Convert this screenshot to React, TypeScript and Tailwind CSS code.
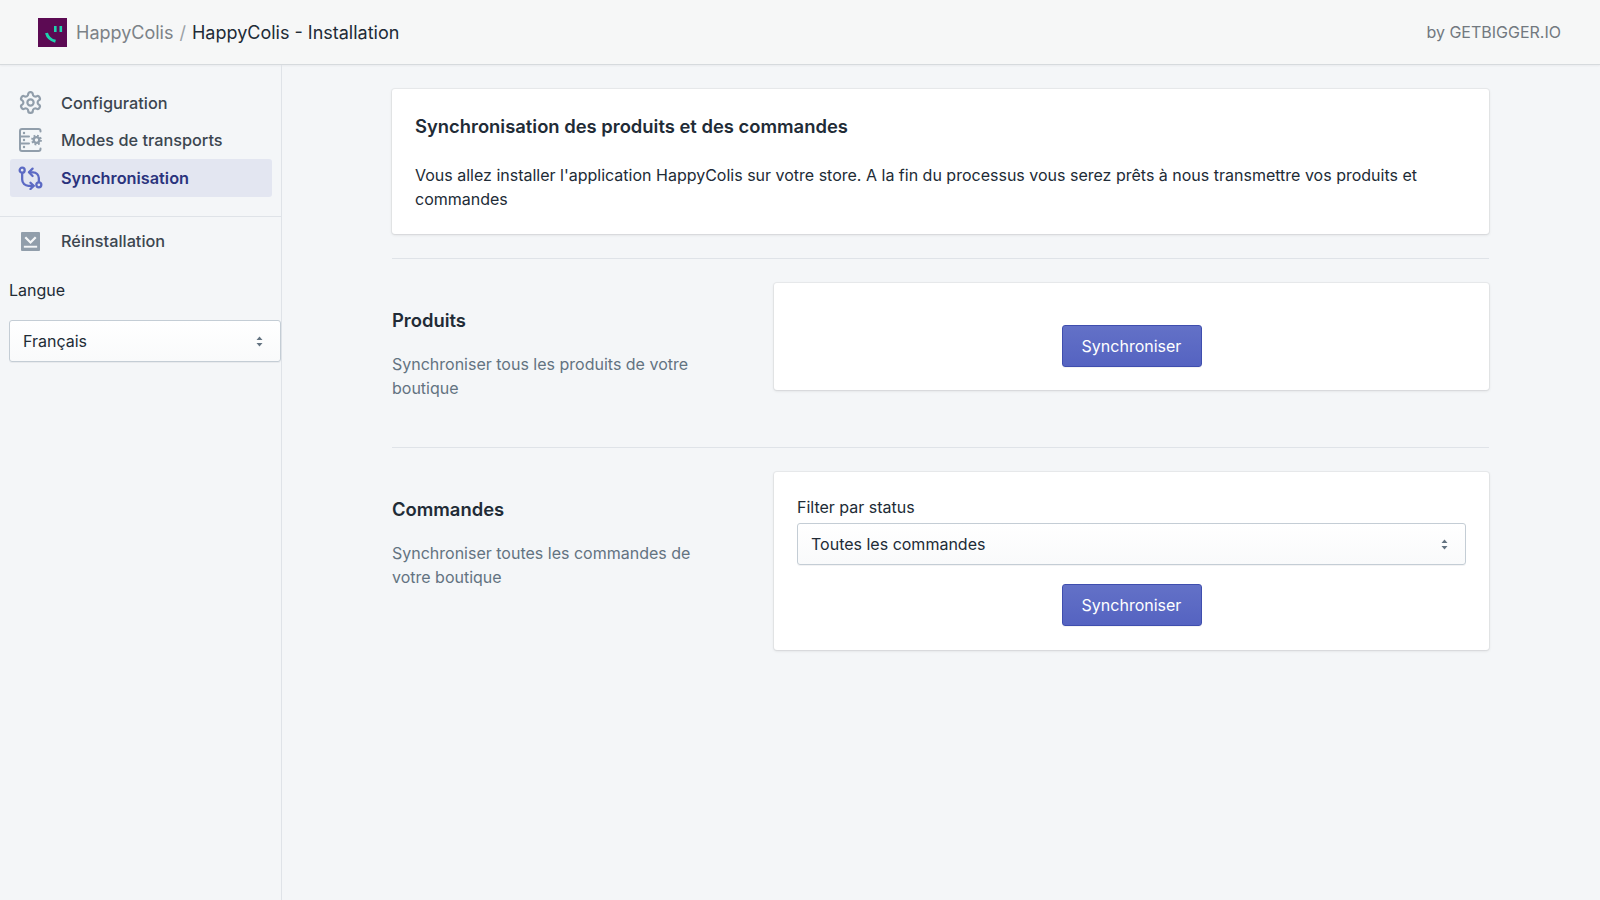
import React from "react";

const inter = { fontFamily: "Inter, sans-serif" };

function Chevrons() {
  return (
    <svg width="7" height="13" viewBox="0 0 7 13">
      <path d="M3.5 1.5 L6.5 5 H0.5 Z M3.5 11.5 L0.5 8 H6.5 Z" fill="#637381" />
    </svg>
  );
}

function Select({ label }: { label: string }) {
  return (
    <div className="flex h-[42px] items-center justify-between rounded-[3px] border border-[#c4cdd5] bg-gradient-to-b from-white to-[#f9fafb] pl-[13px] pr-[17px] text-[16px] text-[#212b36] shadow-[0_1px_0_0_rgba(22,29,37,0.05)]">
      <span>{label}</span>
      <Chevrons />
    </div>
  );
}

function SyncButton() {
  return (
    <button className="flex h-[42px] w-[140px] items-center justify-center rounded-[3px] border border-[#3f4eae] bg-gradient-to-b from-[#6371c7] to-[#5563c1] text-[16px] text-white shadow-[0_1px_0_0_rgba(22,29,37,0.05)]">
      Synchroniser
    </button>
  );
}

function NavItem({ icon, label, active = false }: { icon: React.ReactNode; label: string; active?: boolean }) {
  return (
    <div className={`flex h-[37.5px] items-center rounded-[3px] ${active ? "bg-[#e3e6f1] font-semibold text-[#2a337d]" : "font-medium text-[#3c4650]"}`}>
      <div className="mr-[10px] flex w-[41px] shrink-0 items-center justify-center">{icon}</div>
      <span className="text-[16.3px]">{label}</span>
    </div>
  );
}

function GearIcon() {
  return (
    <svg width="25" height="25" viewBox="0 0 24 24" fill="none" stroke="#919eab" strokeWidth="2.1" strokeLinecap="round" strokeLinejoin="round">
      <path d="M12.22 2h-.44a2 2 0 0 0-2 2v.18a2 2 0 0 1-1 1.73l-.43.25a2 2 0 0 1-2 0l-.15-.08a2 2 0 0 0-2.73.73l-.22.38a2 2 0 0 0 .73 2.73l.15.1a2 2 0 0 1 1 1.72v.51a2 2 0 0 1-1 1.74l-.15.09a2 2 0 0 0-.73 2.73l.22.38a2 2 0 0 0 2.73.73l.15-.08a2 2 0 0 1 2 0l.43.25a2 2 0 0 1 1 1.73V20a2 2 0 0 0 2 2h.44a2 2 0 0 0 2-2v-.18a2 2 0 0 1 1-1.73l.43-.25a2 2 0 0 1 2 0l.15.08a2 2 0 0 0 2.73-.73l.22-.39a2 2 0 0 0-.73-2.73l-.15-.08a2 2 0 0 1-1-1.74v-.5a2 2 0 0 1 1-1.74l.15-.09a2 2 0 0 0 .73-2.73l-.22-.38a2 2 0 0 0-2.73-.73l-.15.08a2 2 0 0 1-2 0l-.43-.25a2 2 0 0 1-1-1.73V4a2 2 0 0 0-2-2z" />
      <circle cx="12" cy="12" r="3" />
    </svg>
  );
}

function ServerGearIcon() {
  return (
    <svg width="24" height="24" viewBox="0 0 24 24" fill="none" stroke="#919eab" strokeWidth="2" strokeLinecap="round">
      <path d="M21.5 3.5V3a2 2 0 0 0-2-2H3a2 2 0 0 0-2 2v18a2 2 0 0 0 2 2h16.5a2 2 0 0 0 2-2v-.5" />
      <path d="M1 8.5h9M1 15.5h9" />
      <path d="M5 5h.01M5 12h.01M5 19h.01" strokeWidth="2.4" />
      <circle cx="17.5" cy="12" r="2.8" strokeWidth="2.3" />
      <circle cx="17.5" cy="12" r="4.5" strokeWidth="1.8" strokeDasharray="1.8 1.73" strokeLinecap="butt" />
    </svg>
  );
}

function SyncIcon() {
  return (
    <svg width="25" height="25" viewBox="0 0 24 24" fill="none" stroke="#5c6ac4" strokeWidth="2.2" strokeLinecap="round" strokeLinejoin="round">
      <circle cx="4" cy="5" r="2.4" />
      <circle cx="20" cy="19" r="2.4" />
      <path d="M4 8v6a6 6 0 0 0 6 6h5" />
      <path d="M12 17l3 3-3 3" />
      <path d="M20 16v-3.500a5.500 5.500 0 0 0-5.500-5.500H11" />
      <path d="M14 3.500 10.500 7l3.500 3.500" />
    </svg>
  );
}

function InstallIcon() {
  return (
    <svg width="19" height="19" viewBox="0 0 20 20">
      <rect width="20" height="20" rx="1" fill="#919eab" />
      <path d="M4.500 5.500 10 11l5.500-5.500" fill="none" stroke="#f4f6f8" strokeWidth="2.400" />
      <rect x="3" y="14.500" width="14" height="2" fill="#f4f6f8" />
    </svg>
  );
}

function Logo() {
  return (
    <svg width="29" height="29" viewBox="0 0 29 29" className="shrink-0">
      <rect width="29" height="29" fill="#5c0a53" />
      <path d="M8.500 15c1 4 4 7 9 8.300" fill="none" stroke="#1ed3ae" strokeWidth="3" />
      <rect x="16" y="8" width="2.600" height="6" fill="#1ed3ae" />
      <rect x="21.500" y="8" width="2.600" height="6" fill="#1ed3ae" />
    </svg>
  );
}

const cardShadow = "shadow-[0_0_0_1px_rgba(63,63,68,0.05),0_1px_3px_0_rgba(63,63,68,0.15)]";

export default function App() {
  return (
    <div className="flex h-[900px] w-[1600px] flex-col overflow-hidden bg-[#f4f6f8] text-[16px] text-[#212b36]" style={inter}>
      <header className="flex h-[65px] shrink-0 items-center justify-between border-b border-[#d6dadd] bg-[#f6f7f7] pl-[38px] pr-[39px] shadow-[0_1px_2px_rgba(22,29,37,0.05)]">
        <div className="flex items-center text-[18px]">
          <Logo />
          <span className="ml-[9px] text-[#7c8287]">HappyColis</span>
          <span className="mx-[6px] text-[#9ba1a6]">/</span>
          <span className="text-[#212b36]">HappyColis - Installation</span>
        </div>
        <span className="text-[16px] text-[#72797f]">by GETBIGGER.IO</span>
      </header>
      <div className="flex min-h-0 flex-1">
        <aside className="w-[282px] shrink-0 border-r border-[#dfe3e8] pt-[19px]">
          <nav className="flex flex-col pl-[10px] pr-[9px]">
            <NavItem icon={<GearIcon />} label="Configuration" />
            <NavItem icon={<ServerGearIcon />} label="Modes de transports" />
            <NavItem icon={<SyncIcon />} label="Synchronisation" active />
          </nav>
          <div className="mt-[19px] border-t border-[#dfe3e8] pl-[10px] pr-[9px] pt-[6px]">
            <NavItem icon={<InstallIcon />} label="Réinstallation" />
          </div>
          <div className="mt-[18px] pl-[9px] pr-0">
            <div className="mb-[18px] leading-[24px] text-[#212b36]">Langue</div>
            <Select label="Français" />
          </div>
        </aside>
        <main className="flex-1 pl-[110px] pr-[111px] pt-[24px]">
          <section className={`h-[145px] rounded-[3px] bg-white pl-[23px] pr-[24px] pt-[23px] ${cardShadow}`}>
            <h1 className="text-[18.4px] font-semibold leading-[28px]">Synchronisation des produits et des commandes</h1>
            <p className="mt-[23px] leading-[24px]">
              Vous allez installer l'application HappyColis sur votre store. A la fin du processus vous serez prêts à nous transmettre vos produits et commandes
            </p>
          </section>
          <div className="mt-[24px] border-t border-[#dfe3e8]" />
          <section className="flex pt-[24px]">
            <div className="w-[382px] shrink-0 pr-[60px] pt-[23px]">
              <h2 className="text-[18.4px] font-semibold leading-[28px]">Produits</h2>
              <p className="mt-[18px] leading-[24px] text-[#637381]">Synchroniser tous les produits de votre boutique</p>
            </div>
            <div className={`flex h-[107px] flex-1 justify-center rounded-[3px] bg-white pt-[42px] ${cardShadow}`}>
              <SyncButton />
            </div>
          </section>
          <div className="mt-[47px] border-t border-[#dfe3e8]" />
          <section className="flex pt-[24px]">
            <div className="w-[382px] shrink-0 pr-[60px] pt-[23px]">
              <h2 className="text-[18.4px] font-semibold leading-[28px]">Commandes</h2>
              <p className="mt-[18px] leading-[24px] text-[#637381]">Synchroniser toutes les commandes de votre boutique</p>
            </div>
            <div className={`h-[178px] flex-1 rounded-[3px] bg-white pl-[23px] pr-[23px] pt-[23px] ${cardShadow}`}>
              <div className="mb-[4px] leading-[24px]">Filter par status</div>
              <Select label="Toutes les commandes" />
              <div className="mt-[19px] flex justify-center">
                <SyncButton />
              </div>
            </div>
          </section>
        </main>
      </div>
    </div>
  );
}
